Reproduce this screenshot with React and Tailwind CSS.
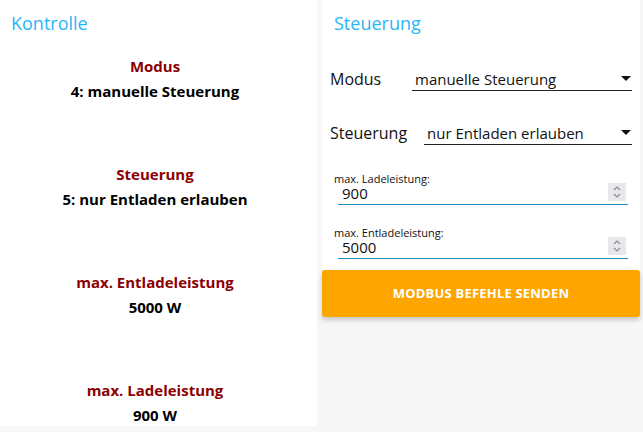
import React from "react";

const font = { fontFamily: '"Open Sans", "Noto Sans", sans-serif' };

function Info({ label, value }) {
  return (
    <div className="flex flex-col items-center">
      <div className="text-[15px] font-bold leading-[20px] text-[#8b0000]">{label}</div>
      <div className="mt-[5px] text-[15px] font-bold leading-[20px] text-black">{value}</div>
    </div>
  );
}

function Caret() {
  return (
    <svg width="10" height="6" viewBox="0 0 10 6" className="shrink-0">
      <path d="M0 0 L10 0 L5 5 Z" fill="#111" />
    </svg>
  );
}

function Spinner() {
  return (
    <div className="flex h-[18px] w-[18px] flex-col items-center justify-center bg-[#e8e8ec]">
      <svg width="10" height="14" viewBox="0 0 10 14">
        <path d="M2 5 L5 2 L8 5" fill="none" stroke="#8a8a96" strokeWidth="1.2" />
        <path d="M2 9 L5 12 L8 9" fill="none" stroke="#8a8a96" strokeWidth="1.2" />
      </svg>
    </div>
  );
}

function NumField({ label, value }) {
  return (
    <div className="ml-[12px] mr-[12px] flex flex-col">
      <div className="text-[11px] leading-[13px] text-[#111]">{label}</div>
      <div className="ml-[4px] flex items-center justify-between border-b border-[#1c8bc0] pb-[2px]">
        <span className="ml-[4px] text-[15px] leading-[17px] text-[#111]">{value}</span>
        <div className="mr-[2px] -mt-[3px]">
          <Spinner />
        </div>
      </div>
    </div>
  );
}

export default function App() {
  return (
    <div style={font} className="flex h-[432px] w-[643px] gap-[5px] overflow-hidden bg-[#f7f7f7]">
      <div className="flex h-[426px] w-[317px] flex-col bg-white">
        <div className="pl-[11px] pt-[11px] text-[18px] leading-[24px] text-[#29b6f6]">Kontrolle</div>
        <div className="mt-[21px] flex flex-col gap-[63px] pr-[7px]">
          <Info label="Modus" value="4: manuelle Steuerung" />
          <Info label="Steuerung" value="5: nur Entladen erlauben" />
          <Info label="max. Entladeleistung" value="5000 W" />
          <Info label="max. Ladeleistung" value="900 W" />
        </div>
      </div>
      <div className="flex w-[318px] flex-col">
        <div className="flex h-[270px] flex-col bg-white">
          <div className="pl-[12px] pt-[11px] text-[18px] leading-[24px] text-[#29b6f6]">Steuerung</div>
          <div className="mt-[33px] flex items-end pl-[8px] pr-[8px]">
            <div className="w-[82px] pb-[1px] text-[16px] leading-[22px] text-[#111]">Modus</div>
            <div className="flex flex-1 items-center justify-between border-b border-[#222] pl-[3px] pr-[1px]">
              <span className="text-[15px] leading-[22px] text-[#111]">manuelle Steuerung</span>
              <Caret />
            </div>
          </div>
          <div className="mt-[31px] flex items-end pl-[8px] pr-[8px]">
            <div className="w-[94px] pb-[1px] text-[16px] leading-[22px] text-[#111]">Steuerung</div>
            <div className="flex flex-1 items-center justify-between border-b border-[#222] pl-[3px] pr-[1px]">
              <span className="text-[15px] leading-[22px] text-[#111]">nur Entladen erlauben</span>
              <Caret />
            </div>
          </div>
          <div className="mt-[27px] flex flex-col gap-[21px]">
            <NumField label="max. Ladeleistung:" value="900" />
            <NumField label="max. Entladeleistung:" value="5000" />
          </div>
        </div>
        <button className="flex h-[47px] items-center justify-center rounded-[3px] bg-[#ffa500] text-[13px] font-bold tracking-[0.2px] text-white shadow-[0_3px_5px_rgba(0,0,0,0.2)]">
          MODBUS BEFEHLE SENDEN
        </button>
      </div>
    </div>
  );
}
